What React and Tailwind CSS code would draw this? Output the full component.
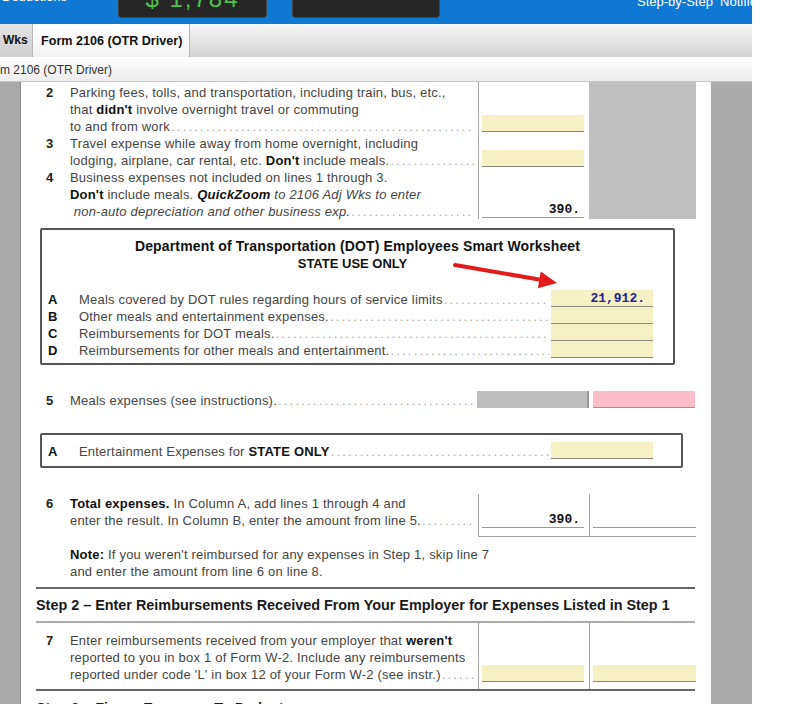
import React from 'react';

const Y = 'bg-[#f6f0c4]';

function Dots() {
  return (
    <span className="flex-1 min-w-0 overflow-hidden whitespace-nowrap text-[#a8a8a8] tracking-[2.2px] pl-[1px]">
      {'.'.repeat(140)}
    </span>
  );
}

function L({ children, dots }) {
  return (
    <div className="flex items-baseline h-[17px] leading-[17px]">
      <span className="whitespace-nowrap">{children}</span>
      {dots && <Dots />}
    </div>
  );
}

function Item({ n, children }) {
  return (
    <div className="flex">
      <span className="w-[34px] pl-[10px] font-bold text-[#222] leading-[17px]">{n}</span>
      <div className="flex-1 min-w-0 pr-[4px]">{children}</div>
    </div>
  );
}

function B({ children }) {
  return <b className="font-bold text-[#111]">{children}</b>;
}

function BoxRow({ label, children, value }) {
  return (
    <div className="flex h-[17px]">
      <span className="w-[37px] pl-[6px] font-bold text-[#111] leading-[19px]">{label}</span>
      <div className="flex-1 min-w-0 flex items-baseline leading-[19px]">
        <span className="whitespace-nowrap">{children}</span>
        <Dots />
      </div>
      <div className={`w-[102px] ml-[2px] ${Y} border-b border-[#8c8a78] text-right pr-[8px] font-['Liberation_Mono',monospace] font-bold text-[13px] tracking-normal leading-[17px] text-[#22229a]`}>
        {value}
      </div>
    </div>
  );
}

function Cell({ children, className = '' }) {
  return <div className={`h-[17px] border-b border-[#8c8a78] ${className}`}>{children}</div>;
}

function Num({ children }) {
  return (
    <div className="text-right pr-[4px] font-['Liberation_Mono',monospace] font-bold text-[13px] tracking-normal leading-[18px] text-[#111]">
      {children}
    </div>
  );
}

export default function App() {
  return (
    <div className="relative w-[801px] h-[704px] overflow-hidden bg-white font-['Liberation_Sans',Arial,sans-serif] text-[12px] text-[#444]">
      <div className="w-[752px]">
        {/* top bar */}
        <div className="h-[24px] bg-[#0f78d2] flex items-start overflow-hidden">
          <div className="w-[118px] text-white text-[13px] leading-[14px] -mt-[10px] pl-[2px]">Deductions</div>
          <div className="w-[149px] h-[18px] bg-[#262626] rounded-b-[4px] border border-t-0 border-[#444] overflow-hidden flex justify-center">
            <span className="text-[#4fc24f] text-[24px] leading-[24px] -mt-[13px] tracking-[2px]">$ 1,784</span>
          </div>
          <div className="w-[25px]" />
          <div className="w-[148px] h-[18px] bg-[#262626] rounded-b-[4px] border border-t-0 border-[#444]" />
          <div className="flex-1 text-white text-[13px] leading-[14px] -mt-[5px] pl-[197px] whitespace-nowrap overflow-hidden">
            Step-by-Step&nbsp;&nbsp;Notifications
          </div>
        </div>

        {/* tab bar */}
        <div className="h-[33px] bg-gradient-to-b from-[#f6f6f6] to-[#d3d3d3] flex items-end">
          <div className="w-[33px] h-[33px] bg-gradient-to-b from-[#e4e4e4] to-[#cfcfcf] border-r border-[#b8b8b8] font-bold text-[#111] text-[12px] leading-[33px] pl-[3px]">
            Wks
          </div>
          <div className="w-[157px] h-[33px] bg-gradient-to-b from-[#ffffff] to-[#f3f3f3] border-r border-[#b8b8b8] font-bold text-[#111] text-[12.6px] leading-[35px] pl-[8px] whitespace-nowrap">
            Form 2106 (OTR Driver)
          </div>
        </div>

        {/* breadcrumb */}
        <div className="h-[25px] bg-gradient-to-b from-[#ffffff] to-[#ececec] border-b border-[#c6c6c6] text-[12px] text-[#333] leading-[26px] whitespace-nowrap">
          m 2106 (OTR Driver)
        </div>

        {/* work area */}
        <div className="flex h-[622px]">
          <div className="w-[21px] bg-[#a9a9a9] border-r border-[#8a8a8a]" />
          <div className="w-[690px] bg-white pl-[15px] pr-[15px] text-[13px] tracking-[0.2px]">
            {/* lines 2-4 */}
            <div className="flex h-[137px]">
              <div className="w-[442px] pt-[2px]">
                <Item n="2">
                  <L>Parking fees, tolls, and transportation, including train, bus, etc.,</L>
                  <L>that <B>didn't</B> involve overnight travel or commuting</L>
                  <L dots>to and from work</L>
                </Item>
                <Item n="3">
                  <L>Travel expense while away from home overnight, including</L>
                  <L dots>lodging, airplane, car rental, etc. <B>Don't</B> include meals.</L>
                </Item>
                <Item n="4">
                  <L>Business expenses not included on lines 1 through 3.</L>
                  <L>
                    <B>Don't</B> include meals. <b className="font-bold italic text-[#111]">QuickZoom</b>{' '}
                    <i>to 2106 Adj Wks to enter</i>
                  </L>
                  <L dots>
                    <i>&nbsp;non-auto depreciation and other business exp.</i>
                  </L>
                </Item>
              </div>
              <div className="w-[111px] border-l border-[#a5a5a5] pl-[3px] pr-[5px] pt-[33px]">
                <Cell className={Y} />
                <div className="h-[18px]" />
                <Cell className={Y} />
                <div className="h-[34px]" />
                <Cell className="border-[#999]">
                  <Num>390.</Num>
                </Cell>
              </div>
              <div className="w-[107px] bg-[#c0c0c0]" />
            </div>

            {/* DOT box */}
            <div className="mt-[9px] ml-[4px] w-[635px] h-[137px] border-2 border-[#555] rounded-[2px] pt-[7px] pr-[20px]">
              <div className="text-center font-bold text-[14px] tracking-[0.15px] leading-[18px] text-[#111] pl-[20px]">
                Department of Transportation (DOT) Employees Smart Worksheet
              </div>
              <div className="text-center font-bold text-[13px] tracking-normal leading-[18px] text-[#111] pl-[10px]">STATE USE ONLY</div>
              <div className="mt-[17px]">
                <BoxRow label="A" value="21,912.">Meals covered by DOT rules regarding hours of service limits</BoxRow>
                <BoxRow label="B">Other meals and entertainment expenses.</BoxRow>
                <BoxRow label="C">Reimbursements for DOT meals.</BoxRow>
                <BoxRow label="D">Reimbursements for other meals and entertainment.</BoxRow>
              </div>
            </div>

            {/* line 5 */}
            <div className="mt-[26px] flex h-[17px]">
              <div className="w-[441px] flex">
                <span className="w-[34px] pl-[10px] font-bold text-[#222] leading-[20px]">5</span>
                <div className="flex-1 min-w-0 flex items-baseline leading-[20px] pr-[4px]">
                  <span className="whitespace-nowrap">Meals expenses (see instructions).</span>
                  <Dots />
                </div>
              </div>
              <div className="w-[112px] bg-[#bdbdbd] border-r-2 border-[#9a9a9a]" />
              <div className="w-[102px] ml-[4px] bg-[#fdbdc8] border-b border-[#a78b8f]" />
            </div>

            {/* entertainment box */}
            <div className="mt-[25px] ml-[4px] w-[643px] h-[35px] border-2 border-[#555] rounded-[2px] pt-[7px] pr-[28px]">
              <BoxRow label="A">
                Entertainment Expenses for <B>STATE ONLY</B>
              </BoxRow>
            </div>

            {/* line 6 */}
            <div className="mt-[26px] flex h-[43px]">
              <div className="w-[442px] pt-[1px]">
                <Item n="6">
                  <L>
                    <B>Total expenses.</B> In Column A, add lines 1 through 4 and
                  </L>
                  <L dots>enter the result. In Column B, enter the amount from line 5.</L>
                </Item>
              </div>
              <div className="w-[111px] border-l border-b border-[#a5a5a5] pl-[3px] pr-[5px] pt-[17px]">
                <Cell className="border-[#999]">
                  <Num>390.</Num>
                </Cell>
              </div>
              <div className="w-[107px] border-l border-b border-[#a5a5a5] pl-[3px] pt-[17px]">
                <Cell className="border-[#999]" />
              </div>
            </div>

            {/* note */}
            <div className="mt-[9px] pl-[34px]">
              <L>
                <B>Note:</B> If you weren't reimbursed for any expenses in Step 1, skip line 7
              </L>
              <L>and enter the amount from line 6 on line 8.</L>
            </div>

            <div className="mt-[7px] w-[659px] h-[2px] bg-[#666]" />

            {/* step 2 */}
            <div className="h-[32px] font-bold text-[14.4px] tracking-normal text-[#1a1a1a] leading-[32px] whitespace-nowrap">
              Step 2 – Enter Reimbursements Received From Your Employer for Expenses Listed in Step 1
            </div>
            <div className="w-[659px] h-[2px] bg-[#aaa]" />

            {/* line 7 */}
            <div className="flex h-[66px]">
              <div className="w-[442px] pt-[9px]">
                <Item n="7">
                  <L>
                    Enter reimbursements received from your employer that <B>weren't</B>
                  </L>
                  <L>reported to you in box 1 of Form W-2. Include any reimbursements</L>
                  <L dots>reported under code 'L' in box 12 of your Form W-2 (see instr.)</L>
                </Item>
              </div>
              <div className="w-[111px] border-l border-[#a5a5a5] pl-[3px] pr-[5px] pt-[42px]">
                <Cell className={Y} />
              </div>
              <div className="w-[107px] border-l border-[#a5a5a5] pl-[3px] pt-[42px]">
                <Cell className={Y} />
              </div>
            </div>
            <div className="w-[659px] h-[2px] bg-[#666]" />

            {/* step 3 */}
            <div className="h-[32px] font-bold text-[14.4px] tracking-normal text-[#1a1a1a] leading-[34px] whitespace-nowrap">
              Step 3 – Figure Expenses To Deduct
            </div>
          </div>
          <div className="w-[41px] bg-[#ababab]" />
        </div>
      </div>

      {/* red annotation arrow */}
      <svg className="absolute left-0 top-0 pointer-events-none" width="801" height="704" viewBox="0 0 801 704">
        <line x1="455" y1="265" x2="542" y2="280" stroke="#e31b1b" strokeWidth="4" strokeLinecap="round" />
        <polygon points="557,283 540.7,271.5 537.9,288.3" fill="#e31b1b" />
      </svg>
    </div>
  );
}
